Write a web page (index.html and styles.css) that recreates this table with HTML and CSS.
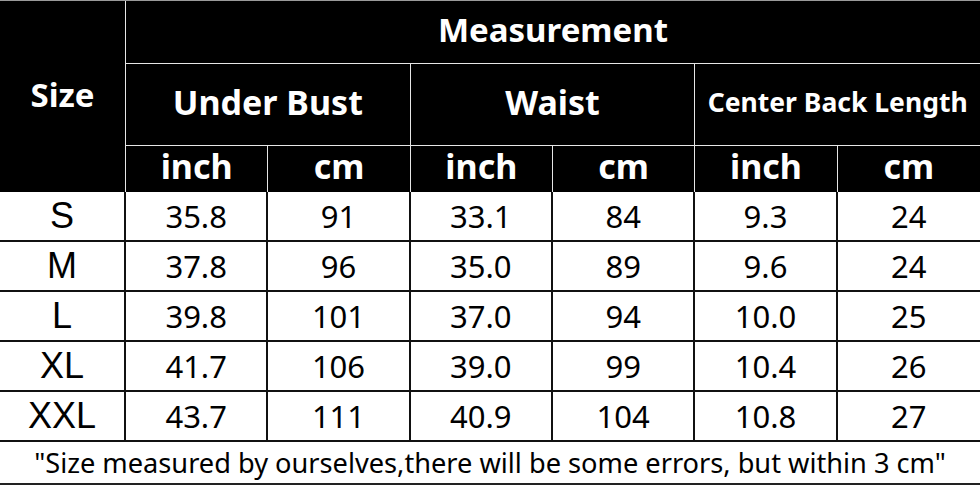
FILE: index.html
```html
<!DOCTYPE html>
<html>
<head>
<meta charset="utf-8">
<link rel="stylesheet" href="styles.css">
</head>
<body>
<div class="chart">
  <div class="h size-h">Size</div>
  <div class="h meas">Measurement</div>
  <div class="h grp">Under Bust</div>
  <div class="h grp">Waist</div>
  <div class="h grp small">Center Back Length</div>
  <div class="h unit">inch</div><div class="h unit">cm</div>
  <div class="h unit">inch</div><div class="h unit">cm</div>
  <div class="h unit">inch</div><div class="h unit last">cm</div>

  <div class="c sz">S</div><div class="c">35.8</div><div class="c">91</div><div class="c">33.1</div><div class="c">84</div><div class="c">9.3</div><div class="c last">24</div>
  <div class="c sz">M</div><div class="c">37.8</div><div class="c">96</div><div class="c">35.0</div><div class="c">89</div><div class="c">9.6</div><div class="c last">24</div>
  <div class="c sz">L</div><div class="c">39.8</div><div class="c">101</div><div class="c">37.0</div><div class="c">94</div><div class="c">10.0</div><div class="c last">25</div>
  <div class="c sz">XL</div><div class="c">41.7</div><div class="c">106</div><div class="c">39.0</div><div class="c">99</div><div class="c">10.4</div><div class="c last">26</div>
  <div class="c sz">XXL</div><div class="c">43.7</div><div class="c">111</div><div class="c">40.9</div><div class="c">104</div><div class="c">10.8</div><div class="c last">27</div>

  <div class="note">"Size measured by ourselves,there will be some errors, but within 3 cm"</div>
</div>
</body>
</html>
```

FILE: styles.css
```css
html, body {
  margin: 0;
  padding: 0;
  background: #fff;
}
.chart {
  width: 980px;
  height: 485px;
  display: grid;
  grid-template-columns: 126px repeat(6, 1fr);
  grid-template-rows: 63px 82px 46px repeat(5, 50px) 44px;
  font-family: "Noto Sans", "Open Sans", sans-serif;
  border-top: 1px solid #9a9a9a;
  box-sizing: border-box;
}
.h {
  background: #000;
  color: #fff;
  font-weight: bold;
  display: flex;
  align-items: center;
  justify-content: center;
  border-right: 1px solid #e6e6e6;
  border-bottom: 1px solid #e6e6e6;
}
.size-h {
  grid-row: 1 / span 3;
  font-size: 33px;
  padding-bottom: 4px;
  border-bottom: none;
}
.meas {
  grid-column: 2 / span 6;
  font-size: 33px;
  padding-bottom: 6px;
  border-right: none;
}
.grp {
  grid-column: span 2;
  font-size: 34px;
  padding-bottom: 6px;
}
.grp.small {
  font-size: 26.5px;
  border-right: none;
}
.unit {
  font-size: 34px;
  border-bottom: none;
  padding-bottom: 6px;
}
.last {
  border-right: none;
}
.c {
  display: flex;
  align-items: center;
  justify-content: center;
  font-size: 31px;
  color: #000;
  border-right: 2px solid #111;
  border-bottom: 2px solid #111;
}
.c.last {
  border-right: none;
}
.sz {
  font-family: "Liberation Sans", Arial, sans-serif;
  font-size: 36px;
}
.note {
  grid-column: 1 / -1;
  display: flex;
  align-items: center;
  justify-content: center;
  font-size: 27.2px;
  color: #000;
  border-bottom: 2px solid #222;
  margin-bottom: 1px;
}
```
